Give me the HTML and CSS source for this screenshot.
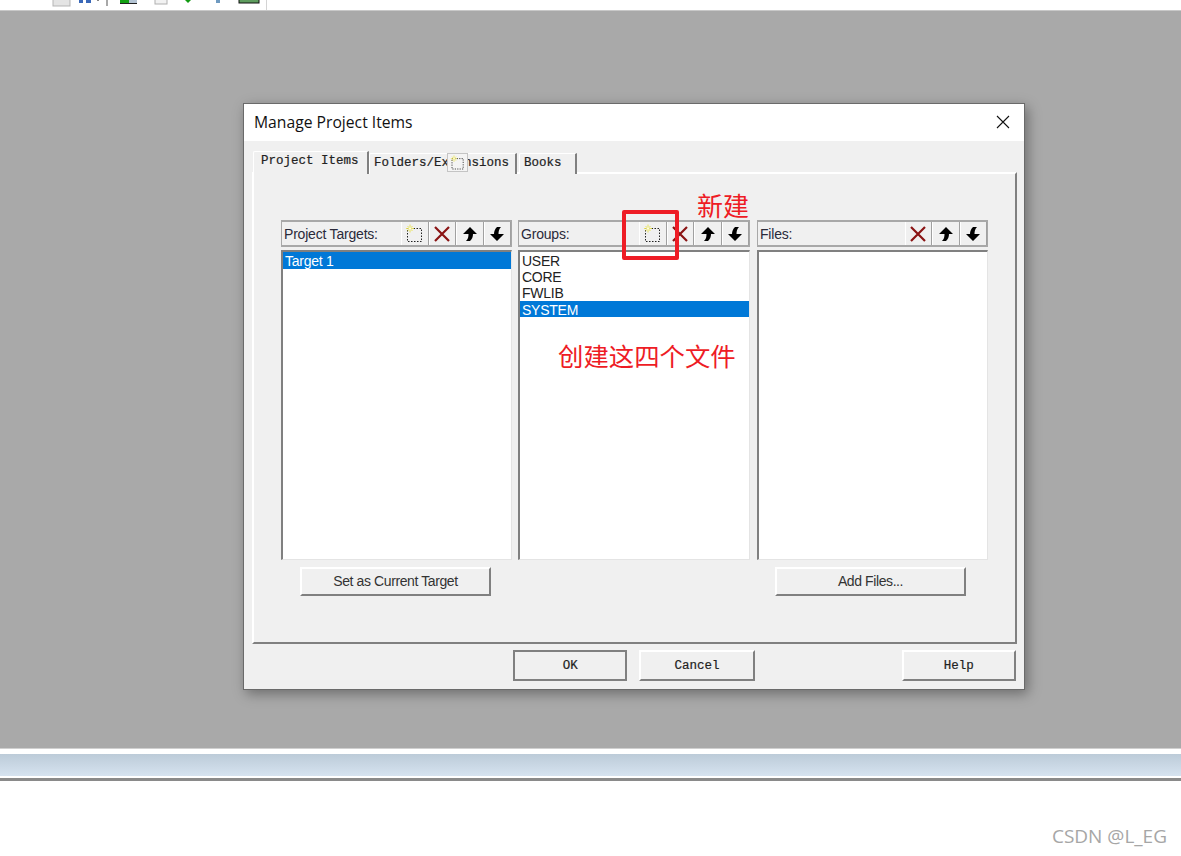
FILE: index.html
```html
<!DOCTYPE html>
<html lang="en">
<head>
    <meta charset="UTF-8">
    <meta name="viewport" content="width=device-width, initial-scale=1.0">
    <title>Manage Project Items</title>
    <link rel="stylesheet" href="styles.css">
</head>
<body>
    <svg class="defs" width="0" height="0">
        <defs>
            <symbol id="new" viewBox="0 0 20 20">
                <rect x="2.500" y="4.500" width="14" height="13" fill="none" stroke="#222" stroke-dasharray="1.5 1.5"/>
                <path d="M5 0.500v8M1 4.500h8M2.500 2l5 5M7.500 2l-5 5" stroke="#e8e034" stroke-width="0.8"/>
                <path d="M5 3v3M3.500 4.500h3" stroke="#fffde0" stroke-width="1"/>
            </symbol>
            <symbol id="del" viewBox="0 0 20 20">
                <path d="M3 3l14 14M17 3L3 17" stroke="#8a1414" stroke-width="2.2" fill="none"/>
            </symbol>
            <symbol id="up" viewBox="0 0 20 20">
                <path d="M10 3l7 7h-4c0 3-1 5-3 7H6c2-2 2.500-4 2.500-7H3z" fill="#000"/>
            </symbol>
            <symbol id="down" viewBox="0 0 20 20">
                <path d="M10 17l-7-7h4c0-3 1-5 3-7h4c-2 2-2.500 4-2.500 7H17z" fill="#000"/>
            </symbol>
        </defs>
    </svg>

    <div class="toolbar">
        <svg class="toolbar-icons" width="266" height="10">
            <rect x="53" y="-2" width="17" height="8" fill="#e4e4e4" stroke="#b5b5b5"/>
            <rect x="79" y="0" width="4" height="3" fill="#3a68b8"/>
            <rect x="86" y="0" width="5" height="3" fill="#3a68b8"/>
            <rect x="97" y="0" width="2" height="1" fill="#888"/>
            <rect x="106" y="0" width="2" height="6" fill="#a8a8a8"/>
            <rect x="120" y="0" width="9" height="3" fill="#12a012"/>
            <rect x="129" y="0" width="8" height="3" fill="#b4c4d4"/>
            <rect x="120" y="3" width="17" height="1" fill="#222"/>
            <rect x="155" y="-2" width="12" height="6" fill="#f2f2f2" stroke="#b0b0b0"/>
            <path d="M185 0h6l-3 3z" fill="#129a12"/>
            <rect x="216" y="0" width="4" height="3" fill="#6f9ac0"/>
            <rect x="239" y="-1" width="20" height="4" fill="#5e9c5e" stroke="#111"/>
        </svg>
    </div>

    <div class="workspace">
        <div class="dialog">
            <div class="titlebar">
                <span>Manage Project Items</span>
                <svg class="close" width="14" height="14" viewBox="0 0 14 14">
                    <path d="M1 1l12 12M13 1L1 13" stroke="#111" stroke-width="1.1"/>
                </svg>
            </div>
            <div class="dialog-body">
                <div class="tabs">
                    <div class="tab active">Project Items</div>
                    <div class="tab second">Folders/Extensions</div>
                    <div class="tab third">Books</div>
                    <div class="drag-ghost"><svg width="16" height="16"><use href="#new"/></svg></div>
                </div>
                <div class="panel">
                    <div class="columns">
                        <div class="column">
                            <div class="col-head">
                                <span class="col-title">Project Targets:</span>
                                <button class="tool"><svg width="20" height="20"><use href="#new"/></svg></button>
                                <button class="tool"><svg width="20" height="20"><use href="#del"/></svg></button>
                                <button class="tool"><svg width="20" height="20"><use href="#up"/></svg></button>
                                <button class="tool"><svg width="20" height="20"><use href="#down"/></svg></button>
                            </div>
                            <div class="list">
                                <div class="row selected target">Target 1</div>
                            </div>
                            <button class="btn col-btn">Set as Current Target</button>
                        </div>
                        <div class="column">
                            <div class="col-head">
                                <span class="col-title">Groups:</span>
                                <button class="tool"><svg width="20" height="20"><use href="#new"/></svg></button>
                                <button class="tool"><svg width="20" height="20"><use href="#del"/></svg></button>
                                <button class="tool"><svg width="20" height="20"><use href="#up"/></svg></button>
                                <button class="tool"><svg width="20" height="20"><use href="#down"/></svg></button>
                            </div>
                            <div class="list">
                                <div class="row">USER</div>
                                <div class="row">CORE</div>
                                <div class="row">FWLIB</div>
                                <div class="row selected">SYSTEM</div>
                            </div>
                        </div>
                        <div class="column files">
                            <div class="col-head">
                                <span class="col-title">Files:</span>
                                <button class="tool"><svg width="20" height="20"><use href="#del"/></svg></button>
                                <button class="tool"><svg width="20" height="20"><use href="#up"/></svg></button>
                                <button class="tool"><svg width="20" height="20"><use href="#down"/></svg></button>
                            </div>
                            <div class="list"></div>
                            <button class="btn col-btn">Add Files...</button>
                        </div>
                    </div>
                </div>
                <div class="actions">
                    <button class="btn action default">OK</button>
                    <button class="btn action cancel">Cancel</button>
                    <button class="btn action help">Help</button>
                </div>
            </div>

            <!-- red notes drawn over the screenshot -->
            <div class="mark-box"></div>
            <div class="note note-new">新建</div>
            <div class="note note-groups">创建这四个文件</div>
        </div>
    </div>

    <div class="statusbar"><div class="statusbar-fill"></div></div>

    <div class="footer">CSDN @L_EG</div>
</body>
</html>
```

FILE: styles.css
```css
html, body {
    margin: 0;
    padding: 0;
}

body {
    width: 1181px;
    height: 856px;
    overflow: hidden;
    background-color: white;
    font-family: "Liberation Sans", Arial, sans-serif;
}

button {
    margin: 0;
    padding: 0;
}

.defs {
    position: absolute;
}

.toolbar {
    height: 10px;
    width: 266px;
    border-right: 1px solid #d4d4d4;
    line-height: 0;
}

.toolbar-icons {
    display: block;
}

.workspace {
    height: 738px;
    box-sizing: border-box;
    padding: 92px 0 0 243px;
    background-color: #a9a9a9;
    border-top: 1px solid #c8c8c8;
}

.dialog {
    position: relative;
    width: 782px;
    height: 587px;
    box-sizing: border-box;
    background-color: #f0f0f0;
    border: 1px solid #6a6a6a;
    box-shadow: 3px 4px 12px rgba(0,0,0,0.35);
}

.titlebar {
    box-sizing: border-box;
    height: 37px;
    display: flex;
    align-items: center;
    justify-content: space-between;
    padding: 0 14px 2px 10px;
    background-color: white;
    font-family: "Open Sans", "Noto Sans", sans-serif;
    font-size: 15.7px;
    color: #111;
}

.dialog-body {
    padding: 10px 8px 0;
}

.tabs {
    position: relative;
    display: flex;
    align-items: flex-end;
    height: 23px;
    margin-bottom: -2px;
    padding-left: 1px;
    font-family: "Liberation Mono", monospace;
    font-size: 12.5px;
    color: #222;
    -webkit-text-stroke: 0.2px #222;
}

.tab {
    box-sizing: border-box;
    height: 21px;
    line-height: 19px;
    padding-left: 4px;
    background-color: #f0f0f0;
    border-top: 1px solid #fff;
    border-left: 1px solid #fff;
    border-right: 2px solid #808080;
    border-top-left-radius: 2px;
}

.tab.active {
    position: relative;
    z-index: 1;
    width: 116px;
    height: 23px;
    padding-left: 7px;
    line-height: 18px;
}

.tab.second {
    width: 148px;
}

.tab.third {
    width: 58px;
    margin-left: 2px;
}

.drag-ghost {
    position: absolute;
    left: 195px;
    top: 2px;
    z-index: 2;
    width: 21px;
    height: 19px;
    display: flex;
    align-items: center;
    justify-content: center;
    background-color: #f4f4f4;
    border: 1px solid #c4c4c4;
    box-sizing: border-box;
}

.panel {
    box-sizing: border-box;
    width: 765px;
    height: 472px;
    padding: 46px 0 0 27px;
    border-top: 2px solid #fff;
    border-left: 2px solid #fff;
    border-right: 2px solid #808080;
    border-bottom: 2px solid #808080;
}

.columns {
    display: grid;
    grid-template-columns: 231px 232px 232px;
    column-gap: 6px;
}

.column.files {
    margin-left: 1px;
}

.col-head {
    box-sizing: border-box;
    height: 27px;
    display: flex;
    align-items: stretch;
    border: 1px solid #a8a8a8;
    border-width: 2px 1px 2px 1px;
    font-size: 14px;
    color: #2a2a3a;
    letter-spacing: -0.2px;
}

.col-title {
    flex: 1;
    line-height: 25px;
    padding-left: 2px;
}

.tool {
    width: 27.5px;
    display: flex;
    align-items: center;
    justify-content: center;
    background-color: #f0f0f0;
    border: none;
    border-left: 1px solid #fff;
    border-right: 1px solid #a0a0a0;
}

.list {
    box-sizing: border-box;
    height: 310px;
    margin-top: 3px;
    background-color: white;
    border-top: 2px solid #808080;
    border-left: 2px solid #808080;
    border-right: 1px solid #e4e4e4;
    border-bottom: 1px solid #e4e4e4;
    font-size: 14px;
    letter-spacing: -0.25px;
    color: #222;
}

.row {
    height: 16.2px;
    line-height: 18px;
    padding-left: 2px;
}

.row.selected {
    background-color: #0078d7;
    color: white;
}

.row.target {
    height: 17px;
}

.btn {
    display: block;
    box-sizing: border-box;
    background-color: #f0f0f0;
    border: 2px solid #fff;
    border-right-color: #808080;
    border-bottom-color: #808080;
    color: #333;
}

.col-btn {
    width: 191px;
    height: 29px;
    margin: 7px 0 0 19px;
    padding-bottom: 2px;
    font-family: "Liberation Sans", Arial, sans-serif;
    font-size: 14px;
    letter-spacing: -0.4px;
}

.files .col-btn {
    margin-left: 18px;
}

.actions {
    display: flex;
    padding: 6px 0 0 261px;
}

.action {
    width: 115px;
    height: 31px;
    font-family: "Liberation Mono", monospace;
    font-size: 12.5px;
    color: #222;
    -webkit-text-stroke: 0.2px #222;
}

.action.default {
    border-color: #808080;
}

.action.cancel {
    width: 116px;
    margin-left: 12px;
}

.action.help {
    margin-left: 147px;
}

.mark-box {
    position: absolute;
    left: 378px;
    top: 106px;
    width: 57px;
    height: 50px;
    box-sizing: border-box;
    border: 4px solid #ee1c25;
    border-radius: 2px;
}

.note {
    position: absolute;
    font-family: "Noto Sans CJK SC", sans-serif;
    line-height: 28px;
    color: #ee1c25;
    white-space: nowrap;
}

.note-new {
    left: 453px;
    top: 87px;
    font-size: 26px;
}

.note-groups {
    left: 314px;
    top: 237px;
    font-size: 25.4px;
}

.statusbar {
    height: 33px;
    box-sizing: border-box;
    padding: 5px 0 2px;
    border-top: 1px solid #cfcfcf;
    border-bottom: 3px solid #8a8a8a;
    background-color: white;
}

.statusbar-fill {
    height: 22px;
    background: linear-gradient(#bccbd8, #d6e3f0);
}

.footer {
    padding: 42px 14px 0 0;
    text-align: right;
    font-family: "Open Sans", sans-serif;
    font-size: 19px;
    color: #a6a6a6;
}
```
